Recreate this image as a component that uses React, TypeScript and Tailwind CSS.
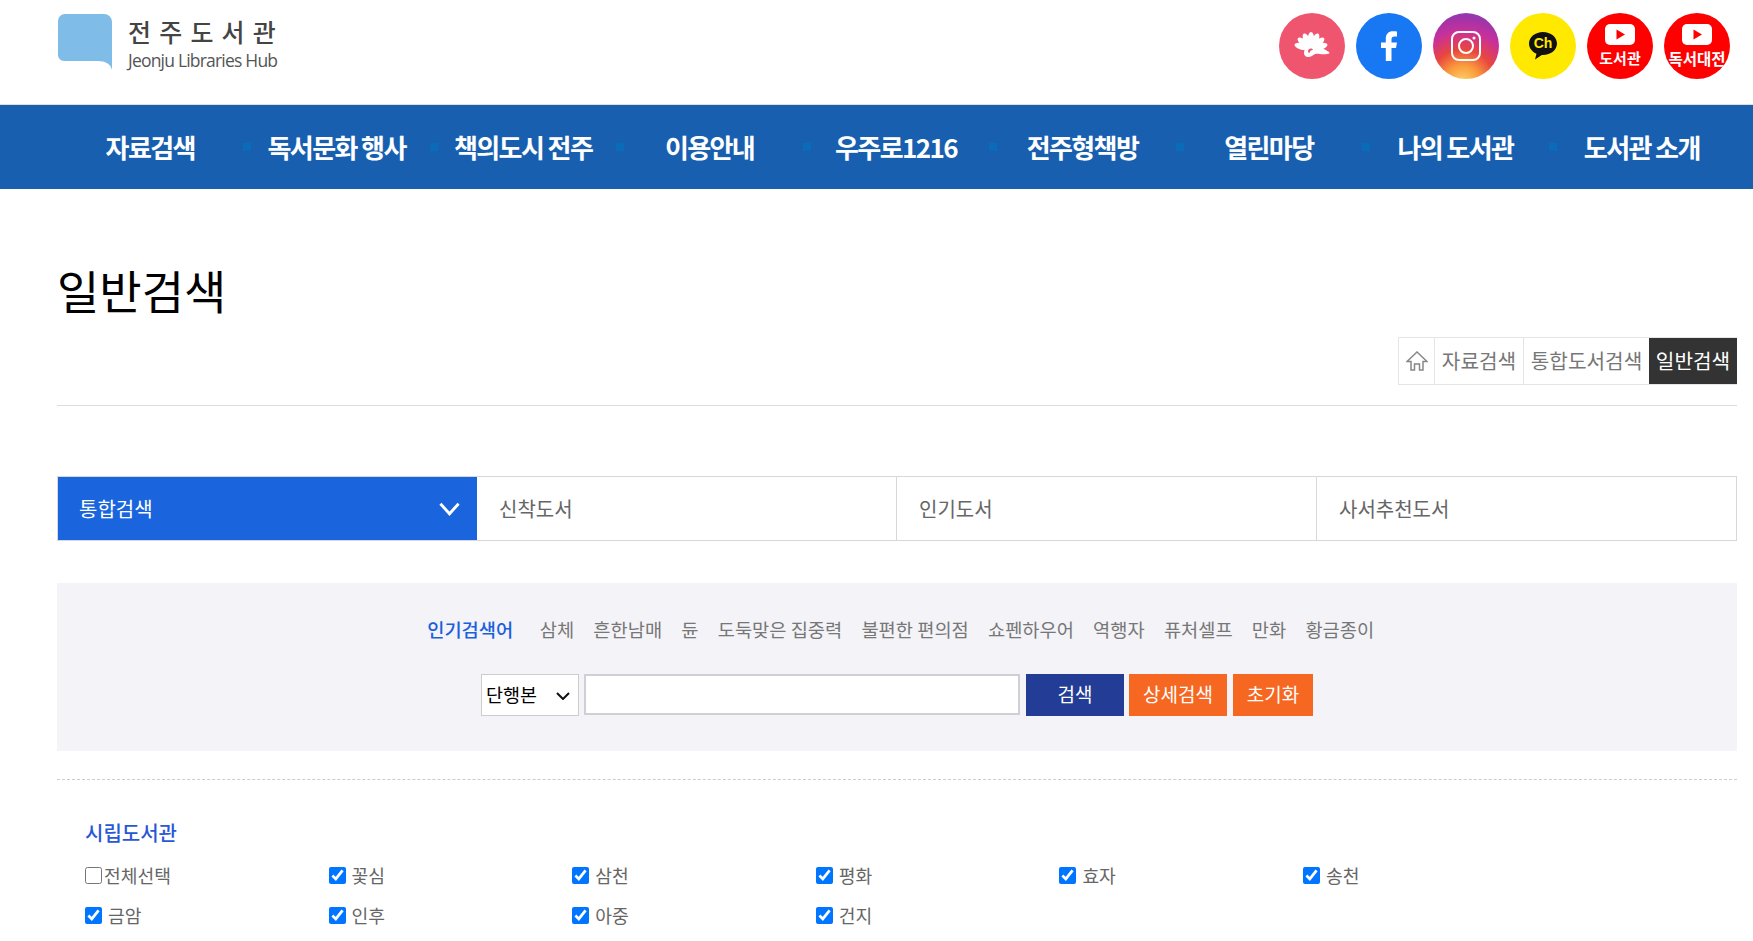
import React from 'react';

const FONT = "font-['Noto_Sans_CJK_KR','Noto_Sans',sans-serif]";

const menus = ['자료검색', '독서문화 행사', '책의도시 전주', '이용안내', '우주로1216', '전주형책방', '열린마당', '나의 도서관', '도서관 소개'];
const keywords = ['삼체', '흔한남매', '듄', '도둑맞은 집중력', '불편한 편의점', '쇼펜하우어', '역행자', '퓨처셀프', '만화', '황금종이'];
const tabs = ['신착도서', '인기도서', '사서추천도서'];
const libs = ['꽃심', '삼천', '평화', '효자', '송천', '금암', '인후', '아중', '건지'];
const petals = [-165, -140, -115, -90, -65, -40, -15];

const Logo = () => (
  <div className="flex items-start gap-4">
    <svg width="54" height="56" viewBox="0 0 54 56" className="shrink-0">
      <path d="M7 0H46a8 8 0 0 1 8 8V56C53 50 47 47 40 47H6a6 6 0 0 1-6-6V7a7 7 0 0 1 7-7Z" fill="#7fbce8" />
    </svg>
    <div className="w-[150px] pt-[2px]">
      <div className="text-[25px] leading-[30px] font-medium text-[#444] tracking-[8.200px] whitespace-nowrap">전주도서관</div>
      <div className="mt-[5px] text-[17.500px] leading-[18px] text-[#555] tracking-[-0.800px] whitespace-nowrap font-['Open_Sans',sans-serif]">Jeonju Libraries Hub</div>
    </div>
  </div>
);

const Circle = ({ bg, children }: { bg: string; children: React.ReactNode }) => (
  <a className={`flex h-[66px] w-[66px] items-center justify-center overflow-hidden rounded-full ${bg}`}>{children}</a>
);

const YoutubeBadge = ({ label, size }: { label: string; size: string }) => (
  <div className="mb-px flex flex-col items-center">
    <svg width="30" height="21" viewBox="0 0 30 21">
      <rect width="30" height="21" rx="5" fill="#fff" />
      <path d="M11.500 5.500 20 10.500 11.500 15.500Z" fill="#f00" />
    </svg>
    <div className={`mt-[4px] font-bold leading-[18px] text-white whitespace-nowrap ${size}`}>{label}</div>
  </div>
);

const Sns = () => (
  <div className="-mt-px flex gap-[11px]">
    <Circle bg="bg-[#f0556f]">
      <svg width="36" height="28" viewBox="0 0 36 28" fill="#fff">
        {petals.map((a) => (
          <ellipse key={a} cx="17" cy="7" rx="3.200" ry="7" transform={`rotate(${a + 90} 17 17)`} />
        ))}
        <path d="M11 17C11 8 17 7 21 10 25 13 28 16 35 20 36 21 35 22 33 22 27 23 24 21 21 22 19 23 17 25 14 25 10 25 9 21 11 17Z" />
        <path d="M14 19C15 16 18 16 19 18 17 18 16 19 15.500 21 14.500 21 14 20 14 19Z" fill="#f0556f" />
      </svg>
    </Circle>
    <Circle bg="bg-[#1877f2]">
      <svg width="18" height="30" viewBox="0 0 18 30" fill="#fff">
        <path d="M11.500 30V17H16L17 11.500H11.500V8.500C11.500 6.800 12.300 5.600 14.500 5.600H17V0.600C16 0.400 14.500 0.200 12.800 0.200 8.700 0.200 5.800 2.800 5.800 7.600V11.500H1V17H5.800V30Z" />
      </svg>
    </Circle>
    <Circle bg="bg-[radial-gradient(circle_at_45%_105%,#fdd56a_0%,#fa9a3c_22%,#e8463f_42%,#c9309a_65%,#a034a8_82%,#6a4bc0_100%)]">
      <svg width="30" height="30" viewBox="0 0 30 30" fill="none" stroke="#fff" strokeWidth="2">
        <rect x="1" y="1" width="28" height="28" rx="7" />
        <circle cx="15" cy="15" r="7" />
        <circle cx="23" cy="7" r="1.500" fill="#fff" stroke="none" />
      </svg>
    </Circle>
    <Circle bg="bg-[#ffe900]">
      <div className="relative">
        <svg width="28" height="30" viewBox="0 0 28 30">
          <path d="M14 1C6.300 1 0 6 0 12.500 0 17 3 20.800 7.500 22.800L6 28.500 12.800 24C13.200 24 13.600 24 14 24 21.700 24 28 18.900 28 12.500 28 6 21.700 1 14 1Z" fill="#111" />
        </svg>
        <span className="absolute left-0 top-[5px] w-full text-center text-[14px] leading-[15px] font-bold text-[#ffe900] font-['Liberation_Sans',sans-serif]">Ch</span>
      </div>
    </Circle>
    <Circle bg="bg-[#ff0000]">
      <YoutubeBadge label="도서관" size="text-[15px]" />
    </Circle>
    <Circle bg="bg-[#ff0000]">
      <YoutubeBadge label="독서대전" size="text-[15.500px]" />
    </Circle>
  </div>
);

const Check = ({ label, checked = true }: { label: string; checked?: boolean }) => (
  <label className="flex items-center text-[18.200px] leading-[24px] text-[#666]">
    <input type="checkbox" defaultChecked={checked} className={`h-[17px] w-[17px] m-0 ${checked ? 'mr-[6px]' : 'mr-[2px]'}`} />
    {label}
  </label>
);

export default function App() {
  return (
    <div className={`min-w-[1753px] bg-white ${FONT}`}>
      <header className="flex h-[104px] justify-between pl-[58px] pr-[23px] pt-[14px]">
        <Logo />
        <Sns />
      </header>

      <nav className="h-[85px] border-t border-[#ddd] bg-[#195fb0]">
        <ul className="ml-[57px] grid h-full w-[1678px] grid-cols-9">
          {menus.map((m, i) => (
            <li key={m} className="relative flex items-center justify-center pb-[2px] text-[26px] font-bold tracking-[-1.600px] text-white whitespace-nowrap">
              {i > 0 && <span className="absolute left-0 top-[38px] h-[8px] w-[8px] bg-[#0a6cb8]" />}
              {m}
            </li>
          ))}
        </ul>
      </nav>

      <main className="ml-[57px] w-[1680px]">
        <div className="border-b border-[#ddd] pb-[20px] pt-[77px]">
          <h1 className="text-[46px] leading-[46px] font-normal text-black">일반검색</h1>
          <div className="mt-[25px] flex justify-end">
            <div className="flex h-[48px] border-y border-l border-[#e5e5e5] text-[20.200px] text-[#777]">
              <div className="flex w-[36px] items-center justify-center border-r border-[#e5e5e5]">
                <svg width="22" height="20" viewBox="0 0 22 20" fill="none" stroke="#888" strokeWidth="1.500">
                  <path d="M1 10.500 11 1 21 10.500H17V19H13.500V13H8.500V19H5V10.500Z" />
                </svg>
              </div>
              <div className="flex w-[89px] items-center justify-center border-r border-[#e5e5e5]">자료검색</div>
              <div className="flex w-[125px] items-center justify-center">통합도서검색</div>
              <div className="flex w-[88px] items-center justify-center bg-[#333] text-white">일반검색</div>
            </div>
          </div>
        </div>

        <div className="mt-[70px] flex h-[65px] border border-[#d8d8d8] text-[20px] text-[#666]">
          <div className="flex w-[419px] items-center justify-between bg-[#1a65dd] pl-[21px] pr-[17px] text-white">
            통합검색
            <svg width="21" height="14" viewBox="0 0 22 14" fill="none" stroke="#fff" strokeWidth="3">
              <path d="M1.500 1.500 11 12 20.500 1.500" />
            </svg>
          </div>
          {tabs.map((t, i) => (
            <div key={t} className={`flex flex-1 items-center pl-[22px] ${i > 0 ? 'border-l border-[#d8d8d8]' : ''}`}>{t}</div>
          ))}
        </div>

        <section className="mt-[42px] h-[168px] bg-[#f3f3f8] pt-[32px]">
          <div className="flex h-[28px] items-center justify-center pl-[17px] text-[18.700px] text-[#777] whitespace-nowrap">
            <strong className="mr-[17px] font-medium text-[#1a5fdc]">인기검색어</strong>
            {keywords.map((k) => (
              <span key={k} className="mx-[9.600px]">{k}</span>
            ))}
          </div>
          <div className="mt-[31px] ml-[424px] flex items-start text-[19px]">
            <div className="relative">
              <select className="block h-[42px] w-[98px] appearance-none border border-[#ccc] bg-white pl-[4px] text-[18.500px] text-black">
                <option>단행본</option>
              </select>
              <svg width="14" height="8" viewBox="0 0 14 8" fill="none" stroke="#111" strokeWidth="2" className="pointer-events-none absolute right-[9px] top-[18px]">
                <path d="M1 1 7 7 13 1" />
              </svg>
            </div>
            <input className="ml-[5px] h-[41px] w-[436px] border-2 border-[#d0d0d4] bg-white" />
            <button className="ml-[6px] h-[42px] w-[98px] bg-[#233c95] pb-[2px] text-white">검색</button>
            <button className="ml-[5px] h-[42px] w-[98px] bg-[#f66722] pb-[2px] text-white">상세검색</button>
            <button className="ml-[6px] h-[42px] w-[80px] bg-[#f66722] pb-[2px] text-white">초기화</button>
          </div>
        </section>

        <div className="mt-[28px] border-t border-dashed border-[#ccc] pl-[28px] pt-[40px]">
          <h2 className="text-[20px] leading-[26px] font-medium text-[#2a57d6]">시립도서관</h2>
          <div className="mt-[17px] grid grid-cols-[repeat(6,243.6px)] gap-y-[16px]">
            <Check label="전체선택" checked={false} />
            {libs.map((l) => (
              <Check key={l} label={l} />
            ))}
          </div>
        </div>
      </main>
    </div>
  );
}
